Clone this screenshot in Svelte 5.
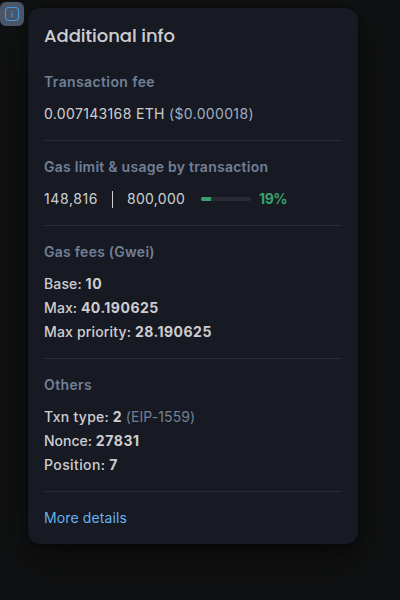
<script>
  const gas = [
    { label: 'Base:', value: '10', ls: 0.12, vs: 0.6 },
    { label: 'Max:', value: '40.190625', ls: 0.1, vs: 0.5 },
    { label: 'Max priority:', value: '28.190625', ls: 0.17, vs: 0.5 }
  ];
  const others = [
    { label: 'Txn type:', value: '2', note: '(EIP-1559)', ls: 0.28, vs: 0.3 },
    { label: 'Nonce:', value: '27831', ls: 0, vs: 0.6 },
    { label: 'Position:', value: '7', ls: 0.4, vs: 0.3 }
  ];
  const usage = 19;
</script>

{#snippet pair(item)}
  <div class="row medium">
    <span style="letter-spacing: {item.ls}px">{item.label}</span>
    <b style="letter-spacing: {item.vs}px">{item.value}</b>
    {#if item.note}<span class="note">{item.note}</span>{/if}
  </div>
{/snippet}

<main>
  <button class="info" aria-label="Transaction info">
    <svg width="16" height="16" viewBox="0 0 16 16" fill="none" stroke="#4299e1">
      <rect x="1.5" y="1.5" width="13" height="13" rx="3.2" stroke-width="1.1" />
      <path d="M8 7v4.3M8 4.7v1.2" stroke-width="1.4" opacity=".8" />
    </svg>
  </button>
  <div class="card">
    <h4>Additional info</h4>
    <section>
      <h5 class="fee">Transaction fee</h5>
      <div class="row amount"><span>0.007143168 ETH</span> <span class="usd">($0.000018)</span></div>
    </section>
    <section>
      <h5>Gas limit &amp; usage by transaction</h5>
      <div class="row usage">
        <span class="used">148,816</span>
        <i class="sep"></i>
        <span class="limit">800,000</span>
        <div class="track"><div class="fill" style="width: {usage}%"></div></div>
        <b class="percent">{usage}%</b>
      </div>
    </section>
    <section>
      <h5>Gas fees (Gwei)</h5>
      {#each gas as item}{@render pair(item)}{/each}
    </section>
    <section>
      <h5 class="fee">Others</h5>
      {#each others as item}{@render pair(item)}{/each}
    </section>
    <a href="#details">More details</a>
  </div>
</main>

<style>
  :global(body) { background: #101112; }
  main {
    position: relative;
    box-sizing: border-box;
    height: 600px;
    padding: 8px 42px 0 28px;
    overflow: hidden;
    font: 400 14px/24px Inter, sans-serif;
    color: rgba(255, 255, 255, 0.8);
  }
  .info {
    position: absolute;
    left: 0;
    top: 2px;
    display: flex;
    align-items: center;
    justify-content: center;
    width: 24px;
    height: 24px;
    padding: 0;
    border: 0;
    border-radius: 6px;
    background: #4a5568;
  }
  .card {
    box-sizing: border-box;
    height: 536px;
    padding: 16px;
    border-radius: 12px;
    background: #171923;
    box-shadow: 0 0 0 1px rgba(0, 0, 0, 0.1), 0 5px 10px rgba(0, 0, 0, 0.2), 0 15px 40px rgba(0, 0, 0, 0.4);
  }
  h4, h5 { margin: 0; font-weight: 500; }
  h4 {
    margin-bottom: 38px;
    height: 8px;
    font-family: Poppins, Inter, sans-serif;
    font-size: 18px;
    line-height: 24px;
    font-feature-settings: "cv11" 1;
    letter-spacing: -0.06px;
  }
  section {
    padding-bottom: 14px;
    margin-bottom: 14px;
    border-bottom: 1px solid rgba(255, 255, 255, 0.08);
  }
  h5 {
    margin-bottom: 8px;
    font-size: 14px;
    font-weight: 600;
    color: #718096;
    letter-spacing: 0.25px;
  }
  h5.fee { letter-spacing: 0.38px; }
  .amount { letter-spacing: 0.34px; }
  .usd { color: #a0aec0; }
  .note { color: #718096; font-weight: 400; letter-spacing: 0.1px; }
  .medium { font-weight: 450; }
  b { font-weight: 650; }
  .usage { display: flex; align-items: center; }
  .used { width: 54px; letter-spacing: 0.6px; }
  .limit { width: 58px; letter-spacing: 0.3px; }
  .sep { width: 1px; height: 17px; margin: 0 14px; background: rgba(255, 255, 255, 0.8); }
  .track {
    width: 50px;
    height: 4px;
    margin: 0 8px 0 16px;
    border-radius: 2px;
    background: #282b33;
    overflow: hidden;
  }
  .fill { height: 100%; background: #38a169; }
  .percent { color: #38a169; letter-spacing: -0.4px; }
  a { color: #63b3ed; text-decoration: none; letter-spacing: 0.12px; }
</style>
